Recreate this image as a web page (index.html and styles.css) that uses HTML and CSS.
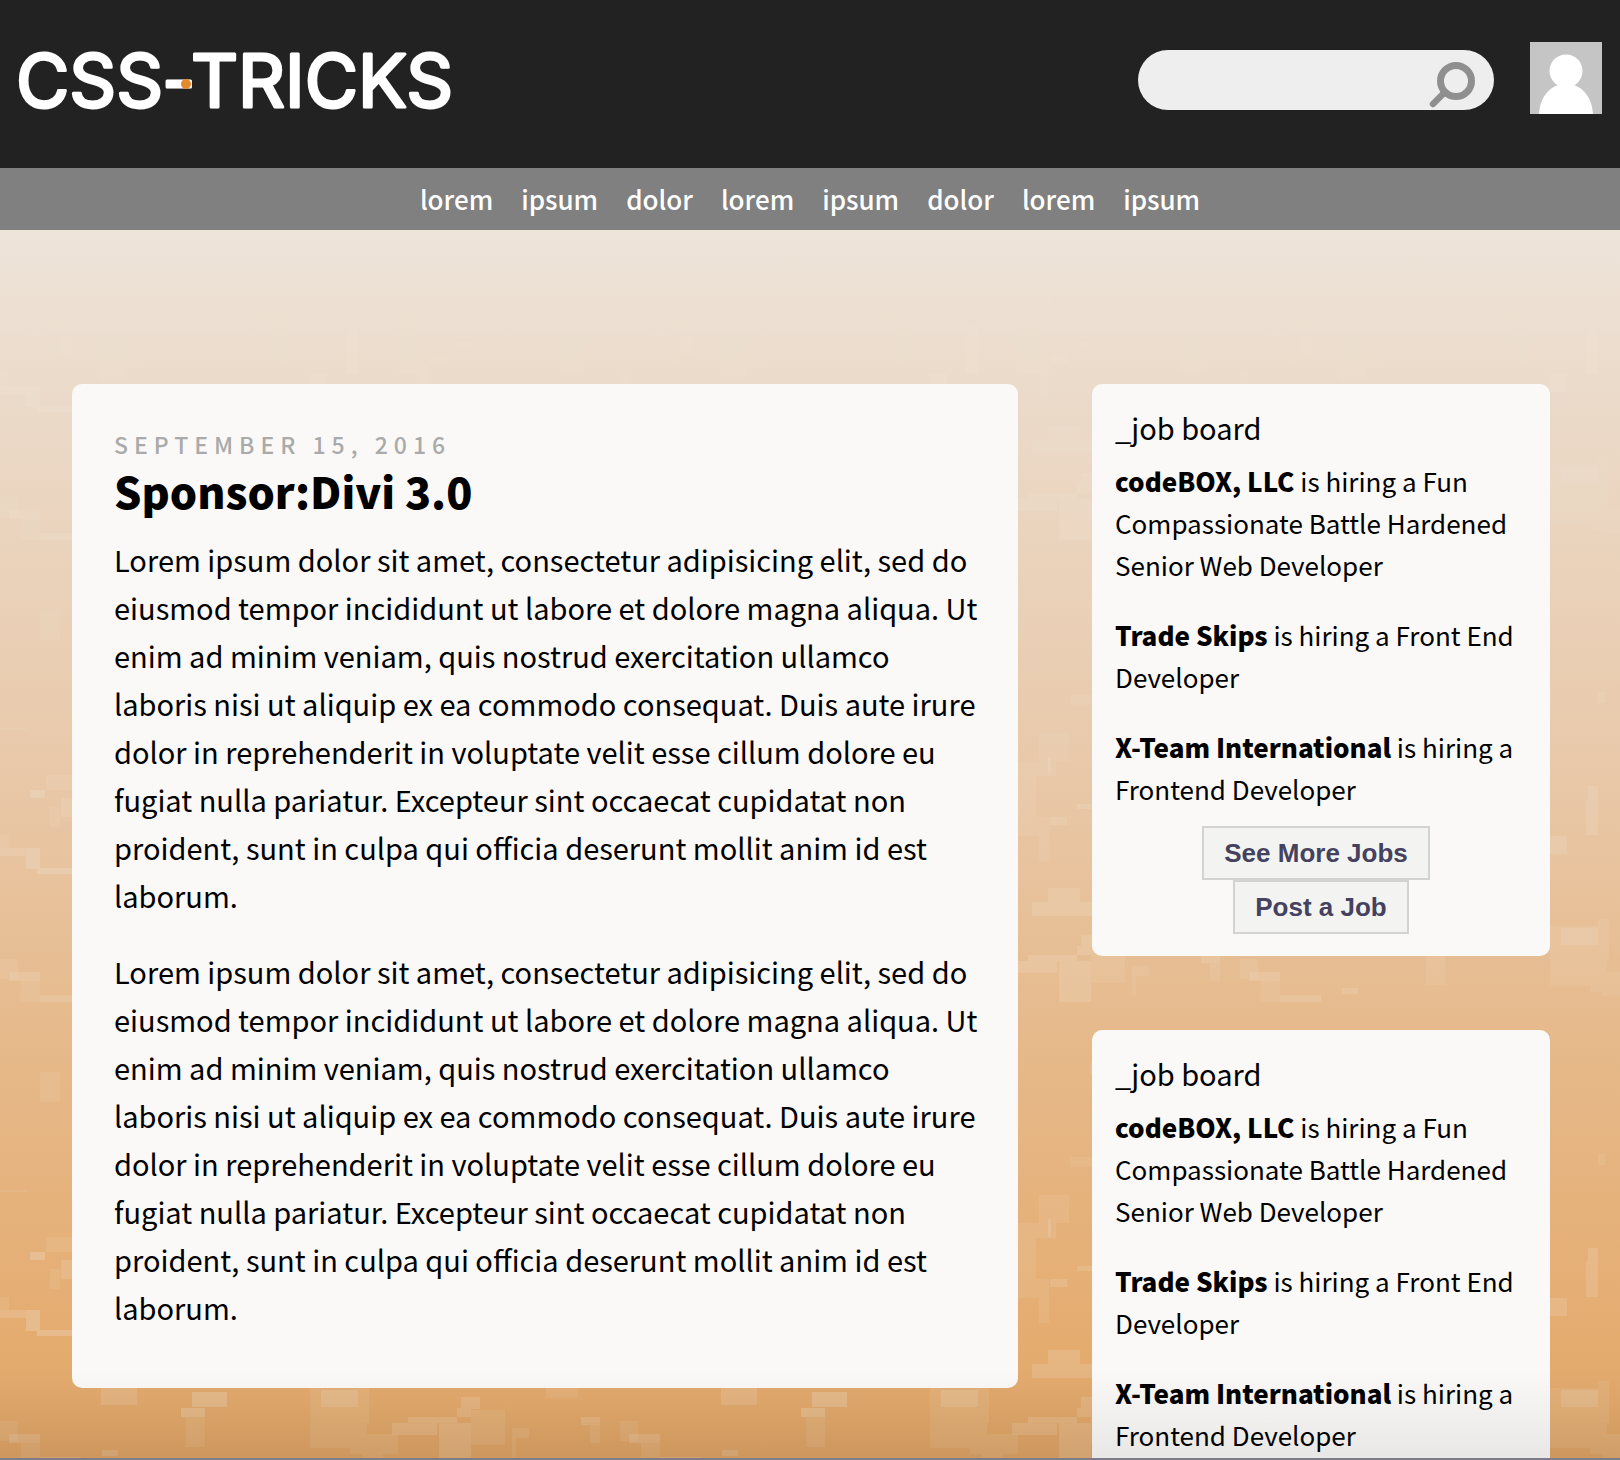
FILE: index.html
```html
<!DOCTYPE html>
<html lang="en">
<head>
<meta charset="utf-8">
<title>CSS-Tricks</title>
<link rel="stylesheet" href="styles.css">
</head>
<body>
<div class="page">
  <header class="masthead">
    <a class="logo" href="#" aria-label="CSS-Tricks">
      <svg class="logo-mark" width="460" height="76" viewBox="0 0 460 76">
        <text x="-1" y="65">CSS</text><text x="145" y="65">-</text><text x="174" y="65">TRICKS</text>
        <circle cx="169" cy="42" r="5" fill="#e58a2c"/>
      </svg>
    </a>
    <form class="search" role="search">
      <input class="search-input" type="search" aria-label="Search">
      <button class="search-button" type="submit" aria-label="Search">
        <svg width="48" height="48" viewBox="0 0 48 48" fill="none" stroke="#8f8f8f" stroke-linecap="round"><circle cx="28" cy="21" r="15.500" stroke-width="7"/><path d="M16 33 5 44" stroke-width="6.500"/></svg>
      </button>
    </form>
    <a class="avatar" href="#" aria-label="Profile">
      <svg width="72" height="72" viewBox="0 0 72 72"><rect width="72" height="72" fill="#c5c5c5"/><circle cx="36" cy="29" r="16.500" fill="#fff"/><path d="M9 72C10 57 17 47 28 43V40H44V43C55 47 62 57 63 72Z" fill="#fff"/></svg>
    </a>
  </header>
  <nav class="nav" aria-label="Main">
    <a href="#">lorem</a><a href="#">ipsum</a><a href="#">dolor</a><a href="#">lorem</a><a href="#">ipsum</a><a href="#">dolor</a><a href="#">lorem</a><a href="#">ipsum</a>
  </nav>
  <main class="content">
    <article class="card post">
      <time class="post-date" datetime="2016-09-15">SEPTEMBER 15, 2016</time>
      <h1 class="post-title">Sponsor:Divi 3.0</h1>
      <p>Lorem ipsum dolor sit amet, consectetur adipisicing elit, sed do eiusmod tempor incididunt ut labore et dolore magna aliqua. Ut enim ad minim veniam, quis nostrud exercitation ullamco laboris nisi ut aliquip ex ea commodo consequat. Duis aute irure dolor in reprehenderit in voluptate velit esse cillum dolore eu fugiat nulla pariatur. Excepteur sint occaecat cupidatat non proident, sunt in culpa qui officia deserunt mollit anim id est laborum.</p>
      <p>Lorem ipsum dolor sit amet, consectetur adipisicing elit, sed do eiusmod tempor incididunt ut labore et dolore magna aliqua. Ut enim ad minim veniam, quis nostrud exercitation ullamco laboris nisi ut aliquip ex ea commodo consequat. Duis aute irure dolor in reprehenderit in voluptate velit esse cillum dolore eu fugiat nulla pariatur. Excepteur sint occaecat cupidatat non proident, sunt in culpa qui officia deserunt mollit anim id est laborum.</p>
    </article>
    <aside class="sidebar">
      <section class="card jobs">
        <h2 class="jobs-title">_job board</h2>
        <p><strong>codeBOX, LLC</strong> is hiring a Fun Compassionate Battle Hardened Senior Web Developer</p>
        <p><strong>Trade Skips</strong> is hiring a Front End Developer</p>
        <p><strong>X-Team International</strong> is hiring a Frontend Developer</p>
        <div class="jobs-actions">
          <button class="button button-more" type="button">See More Jobs</button>
          <button class="button" type="button">Post a Job</button>
        </div>
      </section>
      <section class="card jobs">
        <h2 class="jobs-title">_job board</h2>
        <p><strong>codeBOX, LLC</strong> is hiring a Fun Compassionate Battle Hardened Senior Web Developer</p>
        <p><strong>Trade Skips</strong> is hiring a Front End Developer</p>
        <p><strong>X-Team International</strong> is hiring a Frontend Developer</p>
      </section>
    </aside>
  </main>
</div>
</body>
</html>
```
FILE: styles.css
```css
* { box-sizing: border-box; }
body {
  margin: 0;
  color: #000;
  font-family: "Noto Sans CJK SC", "Noto Sans", sans-serif;
  font-size: 29px;
  line-height: 48px;
}
p, h1, h2 { margin: 0; }
a { color: inherit; text-decoration: none; }

.page {
  position: relative;
  height: 100vh;
  overflow: hidden;
  border-bottom: 2px solid #7f7c8a;
  background:
    url("data:image/svg+xml,%3Csvg xmlns='http://www.w3.org/2000/svg' width='620' height='462' fill='%23ede0d4'%3E%3Cpath opacity='.28' d='M30 98h15v8h-15zM192 238h35v15h-35zM181 254h24v9h-24zM26 156h14v21h-14zM37 176h35v6h-35z'/%3E%3Cpath opacity='.19' d='M101 234h36v17h-36zM102 296h16v6h-16zM461 243h19v12h-19zM0 156h26v8h-26zM61 106h11v19h-11zM9 280h31v9h-31zM40 303h41v7h-41zM581 263h19v8h-19zM430 125h17v8h-17zM428 196h32v14h-32zM412 210h60v14h-60zM457 112h15v5h-15zM428 65h3v18h-3zM348 94h10v13h-10zM346 107h12v36h-12zM310 144h17v18h-17zM321 236h37v17h-37zM392 269h45v12h-45zM408 263h49v6h-49zM457 254h14v9h-14zM439 269h32v41h-32z'/%3E%3Cpath opacity='.11' d='M46 83h26v15h-26zM50 115h10v20h-10zM0 143h9v13h-9zM0 36h27v2h-27zM0 267h18v20h-18zM21 289h19v21h-19zM186 263h19v30h-19zM310 234h57v60h-57zM357 243h10v35h-10zM350 280h48v20h-48zM362 294h21v10h-21zM471 256h34v35h-34zM512 274h17v10h-17zM512 284h4v20h-4zM546 234h32v10h-32zM590 271h10v18h-10zM450 3h22v10h-22zM419 41h30v28h-30zM398 69h38v15h-38zM398 84h18v41h-18zM398 125h31v19h-31zM419 144h10v25h-10zM358 227h11v42h-11zM358 0h7v11h-7zM170 20h12v44h-12zM160 64h34v10h-34zM250 80h40v16h-40zM276 96h12v38h-12zM100 110h26v40h-26zM126 130h18v8h-18zM500 40h48v12h-48zM536 52h14v40h-14zM560 110h24v30h-24zM220 340h14v40h-14zM470 370h30v12h-30zM40 380h20v30h-20z'/%3E%3C/svg%3E") 0 230px,
    linear-gradient(#eee4da 230px, #ebdac9 400px, #e9caac 740px, #e6ba8c 1030px, #e5ac70 1340px, #e2a96c 1400px, #dda264);
}
/* shade along the bottom edge of the window */
.page::after {
  content: "";
  position: absolute;
  inset: auto 0 0;
  height: 90px;
  background: linear-gradient(transparent, rgba(0, 0, 0, 0.07));
  pointer-events: none;
}

.masthead {
  display: flex;
  align-items: flex-start;
  height: 168px;
  padding: 42px 18px 0 17px;
  background: #222;
}
.logo { margin-right: auto; line-height: 0; }
.logo-mark {
  overflow: visible;
  fill: #fff;
  stroke: #fff;
  stroke-width: 3px;
  stroke-linejoin: round;
  font-family: Inter, sans-serif;
  font-size: 73px;
  font-weight: 400;
}
.logo-mark circle { stroke: none; }
.search {
  display: flex;
  align-items: flex-start;
  width: 356px;
  height: 60px;
  margin: 8px 36px 0 0;
  padding: 10px 18px 0 24px;
  border-radius: 30px;
  background: #eee;
}
.search-input {
  flex: 1;
  min-width: 0;
  height: 40px;
  border: 0;
  outline: 0;
  background: none;
  font: inherit;
}
.search-button { padding: 0; border: 0; background: none; line-height: 0; }
.avatar { line-height: 0; }

.nav {
  display: flex;
  justify-content: center;
  gap: 28px;
  height: 62px;
  padding-top: 7px;
  background: #808080;
  color: #fff;
  font-size: 26px;
  font-weight: 500;
}

.content {
  display: grid;
  grid-template-columns: 946fr 458fr;
  align-items: start;
  gap: 74px;
  padding: 154px 70px 0 72px;
}
.card { border-radius: 10px; background: #faf9f7; }
.post { padding: 40px 32px 57px 42px; }
.post p + p { margin-top: 28px; }
.post-date {
  display: block;
  color: #aaa;
  font-size: 23px;
  font-weight: 500;
  line-height: 40px;
  letter-spacing: 6px;
}
.post-title { margin-bottom: 19px; font-size: 43px; font-weight: 900; line-height: 52px; }

.sidebar { display: grid; gap: 74px; }
.jobs { padding: 19px 23px 22px; font-size: 26px; line-height: 42px; }
.jobs-title { margin-bottom: 9px; font-size: 29px; font-weight: 400; line-height: 48px; }
.jobs p + p { margin-top: 28px; }
.jobs strong { font-weight: 900; }
.jobs-actions { display: flex; flex-direction: column; align-items: center; margin-top: 16px; }
.button {
  height: 54px;
  padding: 0 20px;
  border: 2px solid #d3d3d3;
  background: #f3f3f1;
  color: #45425f;
  font-family: "Liberation Sans", sans-serif;
  font-size: 26px;
  font-weight: 700;
}
.button-more { margin-right: 10px; }
```
